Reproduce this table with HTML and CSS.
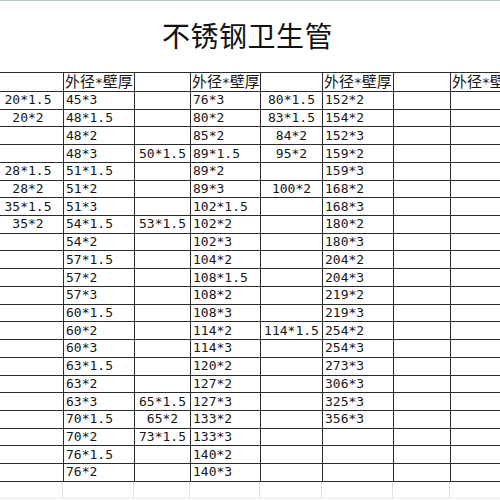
FILE: index.html
```html
<!DOCTYPE html>
<html lang="zh">
<head>
<meta charset="utf-8">
<title>不锈钢卫生管</title>
<link rel="stylesheet" href="styles.css">
</head>
<body>
<div class="sheet">
  <h1 class="title">不锈钢卫生管</h1>
  <table class="grid">
    <colgroup>
      <col class="w71"><col class="w71"><col class="w56"><col class="w70"><col class="w62"><col class="w71"><col class="w57"><col class="w70">
    </colgroup>
    <tr class="head"><td class="c"></td><td class="l">外径<span class="ast">*</span>壁厚</td><td class="c"></td><td class="l">外径<span class="ast">*</span>壁厚</td><td class="c"></td><td class="l">外径<span class="ast">*</span>壁厚</td><td class="c"></td><td class="l">外径<span class="ast">*</span>壁厚</td></tr>
    <tr><td class="c">20*1.5</td><td class="l">45*3</td><td class="c"></td><td class="l">76*3</td><td class="c">80*1.5</td><td class="l">152*2</td><td class="c"></td><td class="l"></td></tr>
    <tr><td class="c">20*2</td><td class="l">48*1.5</td><td class="c"></td><td class="l">80*2</td><td class="c">83*1.5</td><td class="l">154*2</td><td class="c"></td><td class="l"></td></tr>
    <tr><td class="c"></td><td class="l">48*2</td><td class="c"></td><td class="l">85*2</td><td class="c">84*2</td><td class="l">152*3</td><td class="c"></td><td class="l"></td></tr>
    <tr><td class="c"></td><td class="l">48*3</td><td class="c">50*1.5</td><td class="l">89*1.5</td><td class="c">95*2</td><td class="l">159*2</td><td class="c"></td><td class="l"></td></tr>
    <tr><td class="c">28*1.5</td><td class="l">51*1.5</td><td class="c"></td><td class="l">89*2</td><td class="c"></td><td class="l">159*3</td><td class="c"></td><td class="l"></td></tr>
    <tr><td class="c">28*2</td><td class="l">51*2</td><td class="c"></td><td class="l">89*3</td><td class="c">100*2</td><td class="l">168*2</td><td class="c"></td><td class="l"></td></tr>
    <tr><td class="c">35*1.5</td><td class="l">51*3</td><td class="c"></td><td class="l">102*1.5</td><td class="c"></td><td class="l">168*3</td><td class="c"></td><td class="l"></td></tr>
    <tr><td class="c">35*2</td><td class="l">54*1.5</td><td class="c">53*1.5</td><td class="l">102*2</td><td class="c"></td><td class="l">180*2</td><td class="c"></td><td class="l"></td></tr>
    <tr><td class="c"></td><td class="l">54*2</td><td class="c"></td><td class="l">102*3</td><td class="c"></td><td class="l">180*3</td><td class="c"></td><td class="l"></td></tr>
    <tr><td class="c"></td><td class="l">57*1.5</td><td class="c"></td><td class="l">104*2</td><td class="c"></td><td class="l">204*2</td><td class="c"></td><td class="l"></td></tr>
    <tr><td class="c"></td><td class="l">57*2</td><td class="c"></td><td class="l">108*1.5</td><td class="c"></td><td class="l">204*3</td><td class="c"></td><td class="l"></td></tr>
    <tr><td class="c"></td><td class="l">57*3</td><td class="c"></td><td class="l">108*2</td><td class="c"></td><td class="l">219*2</td><td class="c"></td><td class="l"></td></tr>
    <tr><td class="c"></td><td class="l">60*1.5</td><td class="c"></td><td class="l">108*3</td><td class="c"></td><td class="l">219*3</td><td class="c"></td><td class="l"></td></tr>
    <tr><td class="c"></td><td class="l">60*2</td><td class="c"></td><td class="l">114*2</td><td class="c">114*1.5</td><td class="l">254*2</td><td class="c"></td><td class="l"></td></tr>
    <tr><td class="c"></td><td class="l">60*3</td><td class="c"></td><td class="l">114*3</td><td class="c"></td><td class="l">254*3</td><td class="c"></td><td class="l"></td></tr>
    <tr><td class="c"></td><td class="l">63*1.5</td><td class="c"></td><td class="l">120*2</td><td class="c"></td><td class="l">273*3</td><td class="c"></td><td class="l"></td></tr>
    <tr><td class="c"></td><td class="l">63*2</td><td class="c"></td><td class="l">127*2</td><td class="c"></td><td class="l">306*3</td><td class="c"></td><td class="l"></td></tr>
    <tr><td class="c"></td><td class="l">63*3</td><td class="c">65*1.5</td><td class="l">127*3</td><td class="c"></td><td class="l">325*3</td><td class="c"></td><td class="l"></td></tr>
    <tr><td class="c"></td><td class="l">70*1.5</td><td class="c">65*2</td><td class="l">133*2</td><td class="c"></td><td class="l">356*3</td><td class="c"></td><td class="l"></td></tr>
    <tr><td class="c"></td><td class="l">70*2</td><td class="c">73*1.5</td><td class="l">133*3</td><td class="c"></td><td class="l"></td><td class="c"></td><td class="l"></td></tr>
    <tr><td class="c"></td><td class="l">76*1.5</td><td class="c"></td><td class="l">140*2</td><td class="c"></td><td class="l"></td><td class="c"></td><td class="l"></td></tr>
    <tr><td class="c"></td><td class="l">76*2</td><td class="c"></td><td class="l">140*3</td><td class="c"></td><td class="l"></td><td class="c"></td><td class="l"></td></tr>
  </table>
  <div class="ghost">
    <div class="g w71"></div><div class="g w71"></div><div class="g w56"></div><div class="g w70"></div><div class="g w62"></div><div class="g w71"></div><div class="g w57"></div><div class="g w70"></div>
  </div>
</div>
</body>
</html>
```

FILE: styles.css
```css
html, body {
  margin: 0;
  padding: 0;
  background: #ffffff;
  overflow: hidden;
}
body {
  border-top: 1px solid #b6c7c7;
  font-family: "DejaVu Sans Mono", "Noto Sans CJK SC", monospace;
  color: #161616;
}
.sheet {
  width: 500px;
  height: 499px;
  overflow: hidden;
}
.title {
  margin: 0;
  padding: 20px 5px 23px 0;
  font-family: "Noto Sans CJK SC", sans-serif;
  font-weight: 400;
  font-size: 28px;
  line-height: 28px;
  letter-spacing: 0.5px;
  text-align: center;
  color: #111;
}
.grid {
  margin-left: -8px;
  border-collapse: collapse;
  table-layout: fixed;
  width: 528px;
}
.w71 { width: 71px; }
.w70 { width: 70px; }
.w62 { width: 62px; }
.w57 { width: 57px; }
.w56 { width: 56px; }
.grid tr {
  height: 17.73px;
}
.grid td {
  border: 1px solid #2b2b2b;
  padding: 0;
  font-size: 13px;
  line-height: 16px;
  white-space: nowrap;
  vertical-align: middle;
}
.grid td.l {
  text-align: left;
  padding-left: 2px;
}
.grid td.c {
  text-align: center;
}
.head td {
  font-family: "Noto Sans CJK SC", sans-serif;
  font-size: 15px;
  line-height: 16px;
}
.head td.l {
  padding-left: 1px;
}
.ast {
  font-family: "DejaVu Sans Mono", monospace;
  font-size: 13px;
}
.ghost {
  display: flex;
  margin-left: -8px;
  height: 16px;
  border-bottom: 1px solid #ececec;
}
.g {
  flex: none;
  box-sizing: border-box;
  border-right: 1px solid #e2e2e2;
}
```
